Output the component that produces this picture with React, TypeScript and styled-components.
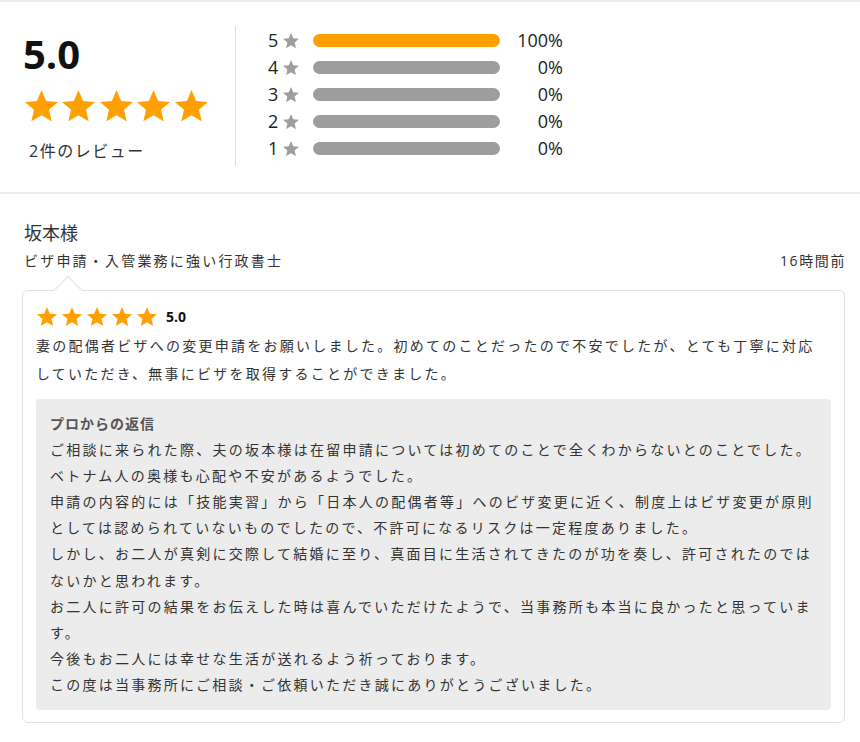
import React from "react";
import styled, { createGlobalStyle } from "styled-components";

const GlobalStyle = createGlobalStyle`
  html, body { margin: 0; padding: 0; background: #fff; }
  body {
    font-family: "Open Sans", "Noto Sans CJK JP", sans-serif;
    color: #333;
  }
  * { box-sizing: border-box; }
`;

const Page = styled.div`
  width: 860px;
  border-top: 2px solid #ececec;
`;

const Summary = styled.section`
  display: flex;
  align-items: stretch;
  padding: 24px 0 26px 24px;
  border-bottom: 2px solid #ececec;
`;

const ScoreColumn = styled.div`
  width: 211px;
  display: flex;
  flex-direction: column;
  padding-top: 6px;
`;

const BigScore = styled.div`
  font-size: 40px;
  line-height: 44px;
  font-weight: 700;
  color: #111;
  margin-left: -1px;
`;

const StarRow = styled.div<{ $gap: number }>`
  display: flex;
  align-items: center;
  gap: ${(p) => p.$gap}px;
`;

const BigStars = styled(StarRow)`
  margin-top: 14px;
  margin-left: 1px;
`;

const ReviewCount = styled.div`
  margin-top: 18px;
  margin-left: 5px;
  font-size: 16px;
  line-height: 24px;
  letter-spacing: 1.5px;
  color: #333;
`;

const Divider = styled.div`
  width: 1px;
  background: #dddddd;
  align-self: stretch;
`;

const Bars = styled.div`
  padding: 1px 0 4px 32px;
  display: flex;
  flex-direction: column;
`;

const BarRow = styled.div`
  display: grid;
  grid-template-columns: 15px 30px 187px 63px;
  align-items: center;
  height: 27px;
`;

const BarLabel = styled.span`
  font-size: 18px;
  color: #222;
  text-align: left;
  line-height: 27px;
`;

const Track = styled.div<{ $fill: boolean }>`
  height: 13px;
  border-radius: 7px;
  background: ${(p) => (p.$fill ? "#ffa000" : "#9e9e9e")};
`;

const Percent = styled.span`
  font-size: 18px;
  color: #222;
  text-align: right;
  line-height: 27px;
  white-space: nowrap;
`;

const ReviewSection = styled.section`
  padding: 27px 15px 0 22px;
`;

const ReviewerName = styled.div`
  font-size: 18px;
  line-height: 24px;
  color: #333;
  margin-left: 2px;
`;

const MetaRow = styled.div`
  display: flex;
  justify-content: space-between;
  align-items: center;
  margin: 5px 0 0 2px;
  font-size: 14px;
  line-height: 22px;
`;

const Subtitle = styled.span`
  letter-spacing: 2.2px;
  color: #333;
`;

const TimeAgo = styled.span`
  letter-spacing: 1.6px;
  color: #333;
  margin-right: -1px;
`;

const Card = styled.div`
  position: relative;
  margin-top: 18px;
  border: 1px solid #e0e0e0;
  border-radius: 6px;
  padding: 15px 13px 12px 13px;
  background: #fff;
`;

const Pointer = styled.span`
  position: absolute;
  top: -11px;
  left: 35px;
  width: 20px;
  height: 20px;
  background: #fff;
  border-top: 1px solid #e0e0e0;
  border-left: 1px solid #e0e0e0;
  transform: rotate(45deg);
`;

const CardStars = styled(StarRow)`
  height: 20px;
  margin-left: 1px;
`;

const CardScore = styled.span`
  font-size: 14px;
  font-weight: 700;
  color: #111;
  margin-left: 4px;
`;

const Comment = styled.p`
  margin: 6px 4px 0 0;
  font-size: 14px;
  line-height: 28px;
  letter-spacing: 2.25px;
  color: #333;
`;

const ReplyBox = styled.div`
  margin-top: 11px;
  background: #ececec;
  border-radius: 4px;
  padding: 12px 14px 12px 14px;
  font-size: 14px;
  line-height: 26.1px;
  letter-spacing: 2.25px;
  color: #333;
`;

const ReplyTitle = styled.div`
  font-weight: 700;
  color: #555;
  letter-spacing: 1px;
`;

const ReplyLine = styled.div``;

const Star = ({ size, color }: { size: number; color: string }) => (
  <svg
    width={size}
    height={size * 0.95}
    viewBox="2 2 20 19"
    style={{ display: "block", flex: "none" }}
  >
    <path
      fill={color}
      d="M12 17.27L18.18 21l-1.64-7.03L22 9.24l-7.19-.61L12 2 9.19 8.63 2 9.24l5.46 4.73L5.82 21z"
    />
  </svg>
);

const rows = [
  { n: 5, pct: 100 },
  { n: 4, pct: 0 },
  { n: 3, pct: 0 },
  { n: 2, pct: 0 },
  { n: 1, pct: 0 },
];

const replyLines = [
  "ご相談に来られた際、夫の坂本様は在留申請については初めてのことで全くわからないとのことでした。",
  "ベトナム人の奥様も心配や不安があるようでした。",
  "申請の内容的には「技能実習」から「日本人の配偶者等」へのビザ変更に近く、制度上はビザ変更が原則としては認められていないものでしたので、不許可になるリスクは一定程度ありました。",
  "しかし、お二人が真剣に交際して結婚に至り、真面目に生活されてきたのが功を奏し、許可されたのではないかと思われます。",
  "お二人に許可の結果をお伝えした時は喜んでいただけたようで、当事務所も本当に良かったと思っています。",
  "今後もお二人には幸せな生活が送れるよう祈っております。",
  "この度は当事務所にご相談・ご依頼いただき誠にありがとうございました。",
];

export default function App() {
  return (
    <>
      <GlobalStyle />
      <Page>
        <Summary>
          <ScoreColumn>
            <BigScore>5.0</BigScore>
            <BigStars $gap={4.4}>
              {[0, 1, 2, 3, 4].map((i) => (
                <Star key={i} size={33} color="#ffa000" />
              ))}
            </BigStars>
            <ReviewCount>2件のレビュー</ReviewCount>
          </ScoreColumn>
          <Divider />
          <Bars>
            {rows.map((r) => (
              <BarRow key={r.n}>
                <BarLabel>{r.n}</BarLabel>
                <Star size={16} color="#9e9e9e" />
                <Track $fill={r.pct > 0} />
                <Percent>{r.pct}%</Percent>
              </BarRow>
            ))}
          </Bars>
        </Summary>
        <ReviewSection>
          <ReviewerName>坂本様</ReviewerName>
          <MetaRow>
            <Subtitle>ビザ申請・入管業務に強い行政書士</Subtitle>
            <TimeAgo>16時間前</TimeAgo>
          </MetaRow>
          <Card>
            <Pointer />
            <CardStars $gap={5}>
              {[0, 1, 2, 3, 4].map((i) => (
                <Star key={i} size={20} color="#ffa000" />
              ))}
              <CardScore>5.0</CardScore>
            </CardStars>
            <Comment>
              妻の配偶者ビザへの変更申請をお願いしました。初めてのことだったので不安でしたが、とても丁寧に対応していただき、無事にビザを取得することができました。
            </Comment>
            <ReplyBox>
              <ReplyTitle>プロからの返信</ReplyTitle>
              {replyLines.map((l, i) => (
                <ReplyLine key={i}>{l}</ReplyLine>
              ))}
            </ReplyBox>
          </Card>
        </ReviewSection>
      </Page>
    </>
  );
}
